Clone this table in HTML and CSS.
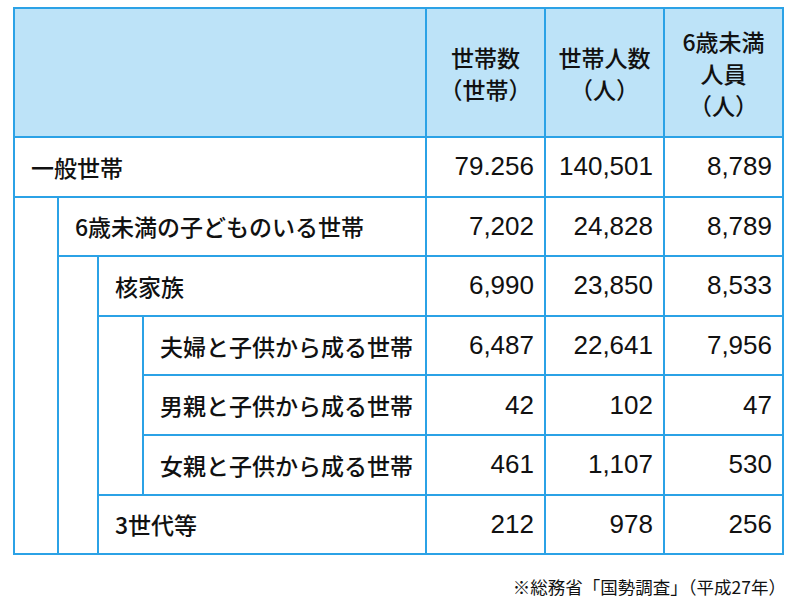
FILE: index.html
```html
<!DOCTYPE html>
<html lang="ja">
<head>
<meta charset="utf-8">
<link rel="stylesheet" href="styles.css">
</head>
<body>
<div class="wrap">
<table class="stats">
  <colgroup>
    <col class="c-ind0"><col class="c-ind1"><col class="c-ind2"><col class="c-label">
    <col class="c-num"><col class="c-num"><col class="c-num">
  </colgroup>
  <thead>
    <tr class="head">
      <th colspan="4"></th>
      <th>世帯数<br>（世帯）</th>
      <th>世帯人数<br>（人）</th>
      <th>6歳未満<br>人員<br>（人）</th>
    </tr>
  </thead>
  <tbody>
    <tr>
      <td class="label" colspan="4">一般世帯</td>
      <td class="num">79.256</td><td class="num">140,501</td><td class="num">8,789</td>
    </tr>
    <tr>
      <td class="ind" rowspan="6"></td>
      <td class="label" colspan="3">6歳未満の子どものいる世帯</td>
      <td class="num">7,202</td><td class="num">24,828</td><td class="num">8,789</td>
    </tr>
    <tr>
      <td class="ind" rowspan="5"></td>
      <td class="label" colspan="2">核家族</td>
      <td class="num">6,990</td><td class="num">23,850</td><td class="num">8,533</td>
    </tr>
    <tr>
      <td class="ind" rowspan="3"></td>
      <td class="label">夫婦と子供から成る世帯</td>
      <td class="num">6,487</td><td class="num">22,641</td><td class="num">7,956</td>
    </tr>
    <tr>
      <td class="label">男親と子供から成る世帯</td>
      <td class="num">42</td><td class="num">102</td><td class="num">47</td>
    </tr>
    <tr>
      <td class="label">女親と子供から成る世帯</td>
      <td class="num">461</td><td class="num">1,107</td><td class="num">530</td>
    </tr>
    <tr>
      <td class="label" colspan="2">3世代等</td>
      <td class="num">212</td><td class="num">978</td><td class="num">256</td>
    </tr>
  </tbody>
</table>
<p class="note">※総務省「国勢調査」（平成27年）</p>
</div>
</body>
</html>
```
FILE: styles.css
```css
html, body {
  margin: 0;
  padding: 0;
  background: #ffffff;
}
body {
  font-family: "Noto Sans CJK JP", "Noto Sans", sans-serif;
  color: #111111;
}
.wrap {
  padding: 7px 0 0 13px;
  width: 770px;
}
.stats {
  border-collapse: collapse;
  table-layout: fixed;
  width: 770px;
}
.c-ind0 { width: 44px; }
.c-ind1 { width: 40px; }
.c-ind2 { width: 45px; }
.c-label { width: 283px; }
.c-num { width: 119px; }
.stats th,
.stats td {
  border: 2px solid #2ba2e6;
  padding: 0;
}
.head th {
  background: #bde3f8;
  height: 127px;
  font-size: 23px;
  font-weight: 500;
  line-height: 32px;
  text-align: center;
  vertical-align: middle;
}
.stats td {
  height: 57.6px;
  font-size: 23px;
  font-weight: 500;
  vertical-align: middle;
}
.label {
  padding-left: 16px !important;
  text-align: left;
}
.num {
  text-align: right;
  padding-right: 10px !important;
  font-family: "Liberation Sans", Arial, sans-serif;
  font-size: 26px !important;
  font-weight: 400 !important;
}
.note {
  margin: 19px -3px 0 0;
  text-align: right;
  font-size: 17.5px;
}
```
